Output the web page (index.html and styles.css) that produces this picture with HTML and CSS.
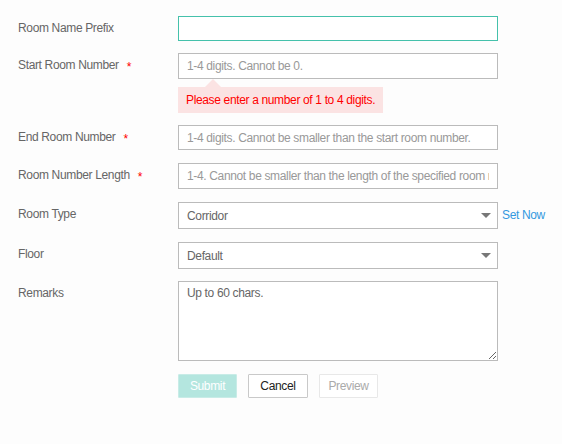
FILE: index.html
```html
<!DOCTYPE html>
<html>
<head>
<meta charset="utf-8">
<link rel="stylesheet" href="styles.css">
</head>
<body>
<form class="form">
  <div class="row">
    <label class="label">Room Name Prefix</label>
    <input class="field field-focus" type="text">
  </div>
  <div class="row row-tip">
    <label class="label">Start Room Number<span class="star">*</span></label>
    <input class="field" type="text" placeholder="1-4 digits. Cannot be 0.">
  </div>
  <div class="tip-row">
    <div class="tip">Please enter a number of 1 to 4 digits.</div>
  </div>
  <div class="row row-r3">
    <label class="label">End Room Number<span class="star">*</span></label>
    <input class="field" type="text" placeholder="1-4 digits. Cannot be smaller than the start room number.">
  </div>
  <div class="row row-r4">
    <label class="label">Room Number Length<span class="star">*</span></label>
    <input class="field" type="text" placeholder="1-4. Cannot be smaller than the length of the specified room number.">
  </div>
  <div class="row row-sel">
    <label class="label">Room Type</label>
    <div class="select"><span>Corridor</span><i class="caret"></i></div>
    <a class="link">Set Now</a>
  </div>
  <div class="row row-sel2">
    <label class="label">Floor</label>
    <div class="select"><span>Default</span><i class="caret"></i></div>
  </div>
  <div class="row row-area">
    <label class="label">Remarks</label>
    <textarea class="area" placeholder="Up to 60 chars."></textarea>
  </div>
  <div class="buttons">
    <button type="button" class="btn btn-submit">Submit</button>
    <button type="button" class="btn btn-cancel">Cancel</button>
    <button type="button" class="btn btn-preview">Preview</button>
  </div>
</form>
</body>
</html>
```
FILE: styles.css
```css
html, body {
  margin: 0;
  padding: 0;
  background: #fdfdfd;
}
body {
  font-family: "Liberation Sans", Arial, sans-serif;
  font-size: 12px;
  letter-spacing: -0.35px;
  color: #666;
  width: 562px;
  height: 444px;
  overflow: hidden;
}
.form {
  padding: 16px 0 0 18px;
}
.row {
  display: flex;
  align-items: flex-start;
  margin-bottom: 12px;
}
.label {
  width: 160px;
  flex: none;
  line-height: 24px;
  color: #666;
}
.star {
  color: #f00;
  margin-left: 8px;
  position: relative;
  top: 2px;
}
.field {
  box-sizing: border-box;
  width: 320px;
  height: 26px;
  margin: 0;
  border: 1px solid #bbb;
  background: #fff;
  padding: 0 8px;
  font-family: "Liberation Sans", Arial, sans-serif;
  font-size: 12px;
  letter-spacing: -0.35px;
  color: #666;
  outline: none;
}
.field::placeholder {
  color: #999;
  opacity: 1;
}
.area::placeholder {
  color: #666;
  opacity: 1;
}
.field-focus {
  height: 25px;
  border-color: #45c1ab;
}
.row-tip { margin-bottom: 0; }
.tip-row {
  padding-left: 160px;
  padding-top: 8px;
  margin-bottom: 12px;
}
.tip {
  position: relative;
  display: inline-block;
  white-space: nowrap;
  background: #fbe3e3;
  color: #f00;
  line-height: 26px;
  height: 26px;
  padding: 0 8px;
}
.tip::before {
  content: "";
  position: absolute;
  left: 27px;
  top: -8px;
  border-left: 8px solid transparent;
  border-right: 8px solid transparent;
  border-bottom: 8px solid #fbe3e3;
}
.row-r3 .field { height: 25px; }
.row-r3 { margin-bottom: 13px; }
.row-r4 { margin-bottom: 13px; }
.select {
  box-sizing: border-box;
  width: 320px;
  height: 27px;
  border: 1px solid #bbb;
  background: #fff;
  display: flex;
  align-items: center;
  justify-content: space-between;
  padding: 0 6px 0 8px;
  color: #666;
}
.caret {
  width: 0;
  height: 0;
  border-left: 5px solid transparent;
  border-right: 5px solid transparent;
  border-top: 5px solid #777;
}
.row-sel { margin-bottom: 13px; }
.row-sel2 { margin-bottom: 12px; }
.link {
  color: #3399e0;
  line-height: 27px;
  margin-left: 4px;
}
.area {
  box-sizing: border-box;
  width: 320px;
  height: 80px;
  margin: 0;
  border: 1px solid #bbb;
  background: #fff;
  padding: 4px 8px;
  font-family: "Liberation Sans", Arial, sans-serif;
  font-size: 12px;
  letter-spacing: -0.35px;
  color: #666;
  outline: none;
}
.row-area { margin-bottom: 13px; }
.buttons {
  display: flex;
  gap: 11px;
  padding-left: 160px;
}
.btn {
  box-sizing: border-box;
  height: 24px;
  padding: 0;
  font-family: "Liberation Sans", Arial, sans-serif;
  font-size: 12px;
  letter-spacing: -0.35px;
  background: #fff;
  border: 1px solid #ccc;
  border-radius: 1px;
  cursor: default;
}
.btn-submit {
  width: 59px;
  background: #b4e6df;
  border-color: #c8ece7;
  color: #fff;
}
.btn-cancel {
  width: 60px;
  color: #222;
  border-color: #c9c9c9;
}
.btn-preview {
  width: 59px;
  color: #aaa;
  border-color: #e8e8e8;
}
```
